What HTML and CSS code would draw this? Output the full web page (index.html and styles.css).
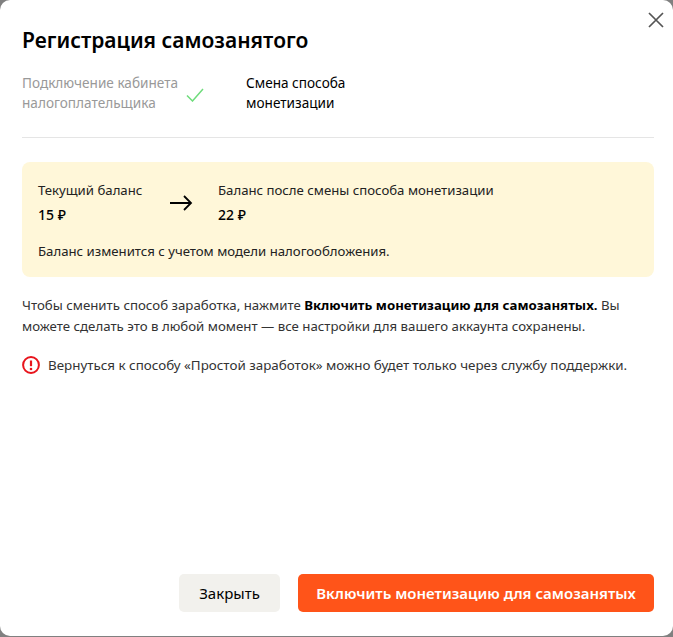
FILE: index.html
```html
<!DOCTYPE html>
<html lang="ru">
<head>
    <meta charset="UTF-8">
    <meta name="viewport" content="width=device-width, initial-scale=1.0">
    <title>Регистрация самозанятого</title>
    <link rel="stylesheet" href="styles.css">
</head>
<body>
    <div class="modal">
        <button type="button" class="close-btn" aria-label="Закрыть">
            <svg width="16" height="16" viewBox="0 0 16 16"><path d="M1 1L15 15M15 1L1 15" stroke="#555" stroke-width="1.7" fill="none"/></svg>
        </button>
        <h1>Регистрация самозанятого</h1>

        <div class="steps">
            <div class="step step-done">Подключение кабинета<br>налогоплательщика</div>
            <svg class="step-check" width="18" height="14" viewBox="0 0 18 14"><path d="M1 7.5L6.5 13L17 1" stroke="#6fdc7c" stroke-width="1.5" fill="none"/></svg>
            <div class="step">Смена способа<br>монетизации</div>
        </div>

        <div class="balance">
            <div class="balance-row">
                <div class="balance-col balance-now">
                    <div class="balance-label">Текущий баланс</div>
                    <div class="balance-value">15 ₽</div>
                </div>
                <svg class="balance-arrow" width="24" height="16" viewBox="0 0 24 16"><path d="M1 8H22M15 1L22 8L15 15" stroke="#000" stroke-width="1.8" fill="none"/></svg>
                <div class="balance-col">
                    <div class="balance-label">Баланс после смены способа монетизации</div>
                    <div class="balance-value">22 ₽</div>
                </div>
            </div>
            <div class="balance-note">Баланс изменится с учетом модели налогообложения.</div>
        </div>

        <p class="info">Чтобы сменить способ заработка, нажмите <b>Включить монетизацию для самозанятых.</b> Вы можете сделать это в любой момент — все настройки для вашего аккаунта сохранены.</p>

        <div class="warning">
            <svg width="18" height="18" viewBox="0 0 18 18"><circle cx="9" cy="9" r="7.9" stroke="#e8141c" stroke-width="2" fill="none"/><path d="M9 4.5V10.2" stroke="#e8141c" stroke-width="2.2"/><circle cx="9" cy="13" r="1.3" fill="#e8141c"/></svg>
            <span>Вернуться к способу «Простой заработок» можно будет только через службу поддержки.</span>
        </div>

        <div class="actions">
            <button type="button" class="btn btn-close">Закрыть</button>
            <button type="button" class="btn btn-main">Включить монетизацию для самозанятых</button>
        </div>
    </div>
</body>
</html>
```

FILE: styles.css
```css
html, body {
    height: 100%;
}
body {
    margin: 0;
    background: #808080;
    font-family: "Noto Sans", "Open Sans", sans-serif;
    color: #000;
}
.modal {
    position: relative;
    box-sizing: border-box;
    height: 636px;
    background: #fff;
    border-radius: 10px;
    padding: 26px 19px 24px 22px;
    display: flex;
    flex-direction: column;
}
.close-btn {
    position: absolute;
    top: 12px;
    right: 9px;
    padding: 0;
    border: none;
    background: none;
    display: flex;
    cursor: pointer;
}
h1 {
    margin: 0;
    font-size: 21px;
    line-height: 28px;
    font-weight: 600;
}
.steps {
    display: flex;
    align-items: center;
    margin-top: 19px;
    padding-bottom: 24px;
    border-bottom: 1px solid #e5e5e5;
    font-size: 13.6px;
    line-height: 20px;
}
.step-done {
    color: #999;
}
.step-check {
    margin: 4px 42px 0 8px;
}
.balance {
    margin-top: 24px;
    padding: 19px 16px 17px;
    background: #fff7d9;
    border-radius: 8px;
    font-size: 13.2px;
    line-height: 18px;
    color: #222;
}
.balance-row {
    display: flex;
    align-items: center;
}
.balance-now {
    width: 131px;
}
.balance-arrow {
    margin-right: 25px;
}
.balance-value {
    margin-top: 6px;
    font-size: 14px;
    font-weight: 500;
    line-height: 20px;
    color: #000;
}
.balance-note {
    margin-top: 17px;
}
.info {
    margin: 18px 0 0;
    font-size: 13.25px;
    line-height: 21px;
    color: #333;
}
.info b {
    color: #000;
}
.warning {
    display: flex;
    align-items: center;
    gap: 8px;
    margin-top: 18px;
    font-size: 13.4px;
    line-height: 20px;
    color: #333;
}
.actions {
    display: flex;
    justify-content: flex-end;
    gap: 18px;
    margin-top: auto;
}
.btn {
    height: 38px;
    border: none;
    border-radius: 5px;
    font-family: inherit;
    font-size: 15px;
    cursor: pointer;
}
.btn-close {
    width: 101px;
    background: #f2f1ed;
    color: #000;
}
.btn-main {
    width: 356px;
    background: #ff5419;
    color: #fff;
    font-weight: 600;
}
```
